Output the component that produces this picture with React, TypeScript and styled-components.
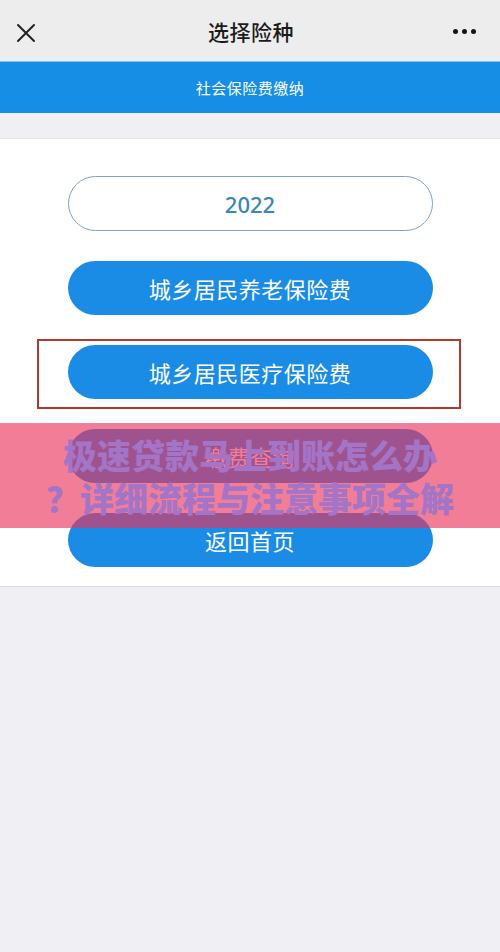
import styled, { createGlobalStyle } from 'styled-components'

const GlobalStyle = createGlobalStyle`
  html, body {
    margin: 0;
    padding: 0;
    background: #efeff4;
  }
  body {
    font-family: "Noto Sans CJK SC", "Noto Sans", sans-serif;
  }
`

const options = ['城乡居民养老保险费', '城乡居民医疗保险费', '缴费查询']

function App() {
  return (
    <Page>
      <GlobalStyle />
      <Header>
        <IconButton aria-label="关闭">
          <svg width="20" height="20" viewBox="0 0 20 20">
            <path d="M2 2 L18 18 M18 2 L2 18" stroke="#222" strokeWidth="2" strokeLinecap="round" />
          </svg>
        </IconButton>
        <Title>选择险种</Title>
        <IconButton aria-label="更多">
          <Dots>
            <Dot />
            <Dot />
            <Dot />
          </Dots>
        </IconButton>
      </Header>
      <SectionBar>社会保险费缴纳</SectionBar>
      <Card>
        <YearPill>2022</YearPill>
        <PillButton>{options[0]}</PillButton>
        <Highlighted>
          <PillButton>{options[1]}</PillButton>
          <RedFrame />
        </Highlighted>
        <PillButton>{options[2]}</PillButton>
        <PillButton>返回首页</PillButton>
      </Card>
      <Banner>
        <BannerLine>极速贷款马上到账怎么办</BannerLine>
        <BannerLine>？详细流程与注意事项全解</BannerLine>
      </Banner>
    </Page>
  )
}

const Page = styled.div`
  position: relative;
  min-height: 952px;
  background: #efeff4;
  display: flex;
  flex-direction: column;
`

const Header = styled.div`
  height: 61px;
  background: #ededed;
  display: flex;
  align-items: center;
  justify-content: space-between;
  padding: 0 14px 0 16px;
  box-sizing: border-box;
`

const IconButton = styled.div`
  width: 40px;
  height: 40px;
  display: flex;
  align-items: center;
  &:first-child {
    justify-content: flex-start;
    padding-top: 5px;
  }
  &:last-child {
    justify-content: flex-end;
  }
`

const Title = styled.div`
  font-size: 21px;
  font-weight: 500;
  color: #1b1b1b;
  letter-spacing: 0.5px;
`

const Dots = styled.div`
  display: flex;
  gap: 4px;
  margin-right: 10px;
  margin-top: 2px;
`

const Dot = styled.span`
  width: 5px;
  height: 5px;
  border-radius: 50%;
  background: #151515;
`

const SectionBar = styled.div`
  height: 52px;
  background: #168ee6;
  border-top: 1px solid #7cc4f2;
  color: #fff;
  font-size: 15px;
  display: flex;
  align-items: center;
  justify-content: center;
  letter-spacing: 0.5px;
  box-sizing: border-box;
`

const Card = styled.div`
  margin-top: 25px;
  background: #fff;
  border-top: 1px solid #e6e6ea;
  border-bottom: 1px solid #dcdce0;
  padding: 37px 0 19px;
  display: flex;
  flex-direction: column;
  align-items: center;
  gap: 30px;
`

const YearPill = styled.div`
  width: 365px;
  height: 55px;
  box-sizing: border-box;
  border: 1.5px solid #7fa3bd;
  border-radius: 28px;
  display: flex;
  align-items: center;
  justify-content: center;
  color: #3a86b6;
  font-size: 22px;
  font-family: "Noto Sans", sans-serif;
  font-weight: 500;
`

const PillButton = styled.div`
  width: 365px;
  height: 54px;
  border-radius: 27px;
  background: #1a8ce6;
  color: #fff;
  font-size: 22px;
  display: flex;
  align-items: center;
  justify-content: center;
  letter-spacing: 0.5px;
`

const Highlighted = styled.div`
  position: relative;
`

const RedFrame = styled.div`
  position: absolute;
  top: -6px;
  bottom: -10px;
  left: -31px;
  right: -28px;
  border: 2px solid #b0392e;
  pointer-events: none;
`

const Banner = styled.div`
  position: absolute;
  top: 423px;
  left: 0;
  right: 0;
  height: 105px;
  background: rgba(234, 52, 92, 0.64);
  display: flex;
  flex-direction: column;
  align-items: center;
  justify-content: center;
`

const BannerLine = styled.div`
  font-size: 34px;
  line-height: 43px;
  font-weight: 900;
  color: #a474c6;
  white-space: nowrap;
`

export default App
